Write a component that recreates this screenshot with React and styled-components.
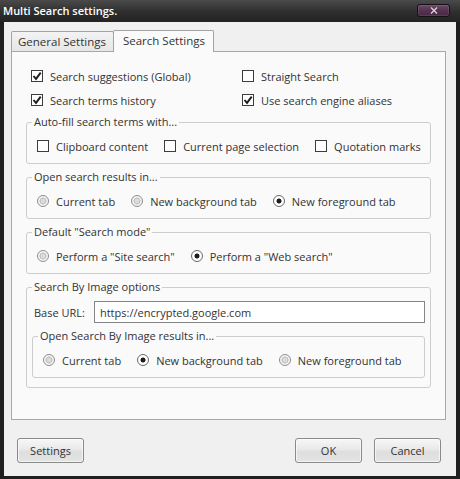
import React from 'react';
import styled, { createGlobalStyle } from 'styled-components';

const GlobalStyle = createGlobalStyle`
  html, body {
    margin: 0;
    padding: 0;
    background: #1f1f1f;
  }
  body {
    font-family: 'Open Sans', 'Liberation Sans', sans-serif;
    font-size: 11px;
    color: #333;
  }
`;

const topOptions = [
  { label: 'Search suggestions (Global)', checked: true },
  { label: 'Straight Search', checked: false },
  { label: 'Search terms history', checked: true },
  { label: 'Use search engine aliases', checked: true },
];

const autoFill = ['Clipboard content', 'Current page selection', 'Quotation marks'];
const openIn = ['Current tab', 'New background tab', 'New foreground tab'];

const Check = ({ checked, label }) => (
  <Option>
    <CheckBox>
      {checked && (
        <svg width="10" height="10" viewBox="0 0 10 10">
          <path d="M1.5 5 L4 7.9 L8.7 1.6" fill="none" stroke="#1c1c1c" strokeWidth="1.9" />
        </svg>
      )}
    </CheckBox>
    {label}
  </Option>
);

const Radio = ({ checked, label }) => (
  <Option>
    <RadioDot $checked={checked} />
    {label}
  </Option>
);

const App = () => {
  return (
    <>
      <GlobalStyle />
      <Window>
        <TitleBar>
          <Title>Multi Search settings.</Title>
          <CloseButton>
            <svg width="8" height="7" viewBox="0 0 8 7">
              <path d="M1 0.5 L7 6.5 M7 0.5 L1 6.5" stroke="#ddd4db" strokeWidth="1.3" />
            </svg>
          </CloseButton>
        </TitleBar>
        <Body>
          <TabBar>
            <Tab>General Settings</Tab>
            <Tab $active>Search Settings</Tab>
          </TabBar>
          <Panel>
            <OptionsGrid>
              {topOptions.map(o => (
                <Check key={o.label} checked={o.checked} label={o.label} />
              ))}
            </OptionsGrid>

            <Group>
              <Legend>Auto-fill search terms with...</Legend>
              <ChoiceRow>
                {autoFill.map(item => (
                  <Check key={item} label={item} />
                ))}
              </ChoiceRow>
            </Group>

            <Group>
              <Legend>Open search results in...</Legend>
              <ChoiceRow>
                {openIn.map((item, i) => (
                  <Radio key={item} label={item} checked={i === 2} />
                ))}
              </ChoiceRow>
            </Group>

            <Group>
              <Legend>Default "Search mode"</Legend>
              <ChoiceRow>
                <Radio label={'Perform a "Site search"'} />
                <Radio label={'Perform a "Web search"'} checked />
              </ChoiceRow>
            </Group>

            <Group>
              <Legend>Search By Image options</Legend>
              <UrlRow>
                <UrlLabel>Base URL:</UrlLabel>
                <UrlInput defaultValue="https://encrypted.google.com" />
              </UrlRow>
              <InnerGroup>
                <Legend>Open Search By Image results in...</Legend>
                <ChoiceRow>
                  {openIn.map((item, i) => (
                    <Radio key={item} label={item} checked={i === 1} />
                  ))}
                </ChoiceRow>
              </InnerGroup>
            </Group>
          </Panel>
          <Footer>
            <Button>Settings</Button>
            <Spacer />
            <Button>OK</Button>
            <Button>Cancel</Button>
          </Footer>
        </Body>
      </Window>
    </>
  );
};

const Window = styled.div`
  display: flex;
  flex-direction: column;
  width: 460px;
  height: 479px;
  background: #1f1f1f;
`;

const TitleBar = styled.div`
  display: flex;
  justify-content: space-between;
  align-items: flex-start;
  height: 22px;
  padding: 0 10px 0 3px;
  background: linear-gradient(#4a4a4a, #2e2e2e 55%, #232323);
`;

const Title = styled.div`
  font-size: 11px;
  font-weight: 600;
  line-height: 21px;
  color: #fff;
`;

const CloseButton = styled.div`
  display: flex;
  align-items: center;
  justify-content: center;
  width: 31px;
  height: 11px;
  margin-top: 4px;
  border: 1px solid #151115;
  border-radius: 3px;
  background: linear-gradient(#6e4868, #553250 50%, #472843);
  box-shadow: inset 0 0 0 1px rgba(255, 255, 255, 0.1);
`;

const Body = styled.div`
  flex: 1;
  display: flex;
  flex-direction: column;
  margin: 0 4px 3px 4px;
  padding: 8px 10px 13px 7px;
  background: #f0f0f0;
`;

const TabBar = styled.div`
  display: flex;
  align-items: flex-end;
  height: 21px;
  position: relative;
  z-index: 1;
`;

const Tab = styled.div`
  height: ${p => (p.$active ? '21px' : '19px')};
  line-height: ${p => (p.$active ? '19px' : '19px')};
  margin-bottom: ${p => (p.$active ? '-1px' : '0')};
  margin-left: ${p => (p.$active ? '-1px' : '0')};
  padding: ${p => (p.$active ? '0 8px 0 9px' : '0 7px 0 6px')};
  border: 1px solid #a3a3a3;
  border-bottom: none;
  border-radius: 2px 2px 0 0;
  background: ${p => (p.$active ? '#fafafa' : 'linear-gradient(#f3f3f3, #e6e6e6)')};
  font-size: 11.5px;
  white-space: nowrap;
`;

const Panel = styled.div`
  flex: 1;
  display: flex;
  flex-direction: column;
  gap: 6px;
  padding: 16px 14px 0 14px;
  border: 1px solid #a8a8a8;
  background: #fafafa;
`;

const OptionsGrid = styled.div`
  display: grid;
  grid-template-columns: 211px 1fr;
  row-gap: 8px;
  margin: 0 0 1px 5px;
`;

const Option = styled.label`
  display: flex;
  align-items: center;
  gap: 7px;
  height: 16px;
  white-space: nowrap;
`;

const CheckBox = styled.span`
  display: flex;
  align-items: center;
  justify-content: center;
  box-sizing: border-box;
  width: 12px;
  height: 12px;
  border: 1px solid #3c3c3c;
  background: #fff;
`;

const RadioDot = styled.span`
  box-sizing: border-box;
  width: 12px;
  height: 12px;
  border-radius: 50%;
  border: 1px solid ${p => (p.$checked ? '#6a6a6a' : '#8e8e8e')};
  background: ${p =>
    p.$checked
      ? 'radial-gradient(circle, #1e1e1e 0 2.2px, #ffffff 2.8px)'
      : 'radial-gradient(circle, #dcdcdc 0 2px, #c2c2c2 2.6px 3.2px, #f4f4f4 3.8px)'};
`;

const Group = styled.fieldset`
  margin: 0;
  min-width: 0;
  padding: 7px 5px 9px;
  border: 1px solid #cdcdcd;
  border-radius: 3px;
`;

const InnerGroup = styled(Group)`
  margin-top: 6px;
`;

const Legend = styled.legend`
  padding: 0 2px;
  line-height: 14px;
  color: #333;
`;

const ChoiceRow = styled.div`
  display: flex;
  gap: 16px;
  margin: 2px 0 0 5px;
`;

const UrlRow = styled.div`
  display: flex;
  align-items: center;
  gap: 9px;
  padding-left: 2px;
`;

const UrlLabel = styled.span`
  white-space: nowrap;
`;

const UrlInput = styled.input`
  flex: 1;
  box-sizing: border-box;
  height: 22px;
  padding: 0 5px;
  border: 1px solid #858585;
  background: #fff;
  font: inherit;
  color: #333;
  outline: none;
`;

const Footer = styled.div`
  display: flex;
  align-items: center;
  gap: 12px;
  margin-top: 18px;
  padding: 0 5px 0 6px;
`;

const Spacer = styled.div`
  flex: 1;
`;

const Button = styled.button`
  box-sizing: border-box;
  width: 67px;
  height: 25px;
  padding: 0;
  border: 1px solid #8a8a8a;
  border-radius: 3px;
  background: linear-gradient(#f7f7f7, #e9e9e9 45%, #dedede 55%, #e4e4e4);
  box-shadow: inset 0 0 0 1px rgba(255, 255, 255, 0.6);
  font: inherit;
  color: #333;
`;

export default App;
